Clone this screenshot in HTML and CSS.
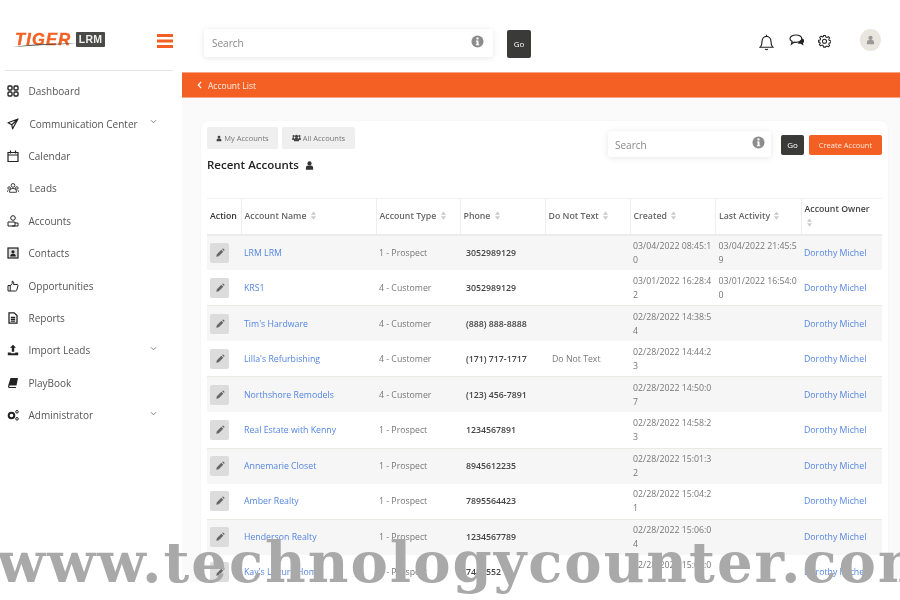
FILE: index.html
```html
<!DOCTYPE html>
<html lang="en">
<head>
<meta charset="utf-8">
<title>Account List</title>
<link rel="stylesheet" href="styles.css">
</head>
<body>
<svg class="defs" width="0" height="0">
  <defs>
    <symbol id="pencil" viewBox="0 0 12 12"><path d="M1.500 10.500l.7-3 5.400-5.400 2.300 2.300-5.400 5.400zM8.500 1.300l.5-.5a.8.8 0 0 1 1.100 0l1.100 1.100a.8.8 0 0 1 0 1.100l-.5.500z" fill="currentColor"/></symbol>
    <symbol id="sort" viewBox="0 0 8 12"><path d="M4 .5L7.500 5H.5zM4 11.500L.5 7h7z" fill="currentColor"/></symbol>
    <symbol id="user" viewBox="0 0 12 12"><circle cx="6" cy="3.200" r="2.800" fill="currentColor"/><path d="M1.200 11.500V9a3 3 0 0 1 3-3h3.600a3 3 0 0 1 3 3v2.500z" fill="currentColor"/></symbol>
    <symbol id="chev" viewBox="0 0 8 6"><path d="M1 1.500l3 3 3-3" fill="none" stroke="currentColor" stroke-width="1.100"/></symbol>
    <symbol id="info" viewBox="0 0 14 14"><circle cx="7" cy="7" r="6.500" fill="currentColor"/><rect x="5.900" y="2.600" width="2.200" height="2.200" fill="#fff"/><path d="M5.200 5.800h2.900v4.100h.8v1.200H5.200V9.900H6V7H5.200z" fill="#fff"/></symbol>
  </defs>
</svg>
<div class="app">
  <aside class="sidebar">
    <div class="brand">
      <div class="logo"><span class="logo-tiger">TIGER</span><span class="logo-lrm">LRM</span>
        <svg class="logo-swoosh" viewBox="0 0 64 6"><path d="M0 6C14 3.500 36 2.500 64 2.500 40 3.500 20 4.500 0 6z" fill="#4a4a48"/></svg>
      </div>
      <svg class="burger" viewBox="0 0 16 14"><path d="M0 0h16v3H0zM0 5.500h16v3H0zM0 11h16v3H0z" fill="#f46023"/></svg>
    </div>
    <nav class="nav">
      <a class="nav-item"><svg class="nav-ico" viewBox="0 0 12 12"><g fill="none" stroke="#222" stroke-width="1.400"><rect x="1" y="1" width="4" height="4" rx="1"/><rect x="7" y="1" width="4" height="4" rx="1"/><rect x="1" y="7" width="4" height="4" rx="1"/><rect x="7" y="7" width="4" height="4" rx="1"/></g></svg><span>Dashboard</span></a>
      <a class="nav-item nudge"><svg class="nav-ico" viewBox="0 0 12 12"><path d="M11 1L1 4.800l3.800 2 .8 4zM11 1L4.800 6.800" fill="none" stroke="#222" stroke-width="1.200" stroke-linejoin="round"/></svg><span>Communication Center</span><svg class="chev"><use href="#chev"/></svg></a>
      <a class="nav-item"><svg class="nav-ico" viewBox="0 0 12 12"><path d="M1 2.500h10v9H1zM1 5h10M3.500 .5v3M8.500 .5v3" fill="none" stroke="#222" stroke-width="1.200"/></svg><span>Calendar</span></a>
      <a class="nav-item nudge"><svg class="nav-ico" viewBox="0 0 14 12"><g fill="none" stroke="#222" stroke-width="1"><circle cx="7" cy="3" r="2.200"/><path d="M3 9.500a4 3 0 0 1 8 0v1.500H3z"/><circle cx="2.500" cy="6" r="1.500"/><circle cx="11.500" cy="6" r="1.500"/><path d="M.5 10.500V9.500l1-1M13.500 10.500V9.500l-1-1"/></g></svg><span>Leads</span></a>
      <a class="nav-item"><svg class="nav-ico" viewBox="0 0 12 12"><g fill="none" stroke="#222" stroke-width="1"><circle cx="6" cy="3" r="2.300"/><path d="M1 7h7v4H1zM8 8h3v3H5"/></g></svg><span>Accounts</span></a>
      <a class="nav-item"><svg class="nav-ico" viewBox="0 0 12 12"><rect x="1" y="1" width="10" height="10" fill="#ddd" stroke="#222" stroke-width="1.200"/><circle cx="6" cy="4.800" r="1.600" fill="#222"/><path d="M3.200 9.500a2.800 2.800 0 0 1 5.600 0z" fill="#222"/></svg><span>Contacts</span></a>
      <a class="nav-item"><svg class="nav-ico" viewBox="0 0 12 12"><path d="M1 5.500h2.200v5.500H1zM3.200 6l2-2.500V1.200c1.500 0 1.800 1.300 1.300 3.300h3.700c.8 0 1 .8.700 1.500l-1.200 4.300c-.2.500-.5.700-1 .7H3.200" fill="none" stroke="#222" stroke-width="1"/></svg><span>Opportunities</span></a>
      <a class="nav-item"><svg class="nav-ico" viewBox="0 0 12 12"><path d="M2 .8h5.200L10 3.600v7.600H2zM3.800 5.500h4.400M3.800 7.300h4.400M3.800 9.100h4.400" fill="none" stroke="#222" stroke-width="1.300"/></svg><span>Reports</span></a>
      <a class="nav-item"><svg class="nav-ico" viewBox="0 0 12 12"><path d="M6 .8l3 3H7.200v4H4.800v-4H3zM.8 8.500h3v.8h4.400v-.8h3v2.700H.8z" fill="#222"/></svg><span>Import Leads</span><svg class="chev"><use href="#chev"/></svg></a>
      <a class="nav-item"><svg class="nav-ico" viewBox="0 0 12 12"><path d="M3.500 1H11L9.500 8.500H2.800c-.8 0-1 1.500 0 1.500H9v1H2.300C.8 11 .8 9 1.500 7.500z" fill="#222"/></svg><span>PlayBook</span></a>
      <a class="nav-item"><svg class="nav-ico" viewBox="0 0 12 12"><circle cx="4.500" cy="6.500" r="2.800" fill="none" stroke="#222" stroke-width="2"/><circle cx="10" cy="2.800" r="1.300" fill="none" stroke="#222" stroke-width="1"/><circle cx="10" cy="9.800" r="1.300" fill="none" stroke="#222" stroke-width="1"/></svg><span>Administrator</span><svg class="chev"><use href="#chev"/></svg></a>
    </nav>
  </aside>
  <main class="main">
    <header class="topbar">
      <div class="search search-top"><span>Search</span><svg class="info"><use href="#info"/></svg></div>
      <button class="btn-go btn-go-top">Go</button>
      <div class="top-icons">
        <svg class="ti ti-bell" viewBox="0 0 14 16"><path d="M1 12.500c1.500-1.500 1.800-3 1.800-5.500 0-2.800 1.800-4.800 4.200-4.800s4.200 2 4.200 4.800c0 2.500.3 4 1.800 5.500zM5.800 14a1.300 1.300 0 0 0 2.400 0M7 .8v1.400" fill="none" stroke="#222" stroke-width="1.100"/></svg>
        <svg class="ti ti-chat" viewBox="0 0 16 13"><path d="M7 1c3.300 0 5.800 1.600 5.800 3.700S10.300 8.400 7 8.400c-.8 0-1.300 0-2-.2L2.500 10l.6-2.600C1.800 6.800 1 5.800 1 4.700 1 2.600 3.700 1 7 1z" fill="none" stroke="#222" stroke-width="1.200"/><path d="M13.500 4.500c1.200.8 1.800 1.700 1.500 3-.2 1-.8 1.500-1 1.700l.6 2.300-3-1.800c-1 .2-2 0-3-.5z" fill="#222"/></svg>
        <svg class="ti ti-gear" viewBox="0 0 14 14"><path d="M6 1h2l.4 1.700 1.200.5 1.500-.9 1.400 1.400-.9 1.500.5 1.200 1.700.4v2l-1.700.4-.5 1.200.9 1.500-1.400 1.400-1.500-.9-1.200.5L8 13.600H6l-.4-1.700-1.200-.5-1.500.9-1.400-1.400.9-1.500-.5-1.200L.6 8.300v-2l1.700-.4.5-1.200-.9-1.500 1.400-1.400 1.500.9 1.200-.5z" fill="none" stroke="#222" stroke-width="1.100" stroke-linejoin="round"/><circle cx="7" cy="7.300" r="2.200" fill="none" stroke="#222" stroke-width="1.100"/></svg>
        <div class="avatar"><svg class="avatar-ico"><use href="#user"/></svg></div>
      </div>
    </header>
    <div class="crumb"><svg class="crumb-ico" viewBox="0 0 6 10"><path d="M5 1L1.500 5 5 9" fill="none" stroke="#fff" stroke-width="1.500"/></svg><span>Account List</span></div>
    <section class="content">
      <div class="card">
        <div class="toolbar">
          <div class="toolbar-left">
            <div class="tabs">
              <button class="tab"><svg class="tab-ico"><use href="#user"/></svg>My Accounts</button>
              <button class="tab"><svg class="tab-ico tab-ico-wide" viewBox="0 0 14 12"><circle cx="7" cy="3.500" r="2.500" fill="currentColor"/><circle cx="2.500" cy="3" r="1.800" fill="currentColor"/><circle cx="11.500" cy="3" r="1.800" fill="currentColor"/><path d="M3 11V8.500a2.500 2.500 0 0 1 2.500-2.500h3A2.500 2.500 0 0 1 11 8.500V11zM.3 9V7a2 2 0 0 1 2-2h.7v4zM13.700 9V7a2 2 0 0 0-2-2H11v4z" fill="currentColor"/></svg>All Accounts</button>
            </div>
            <h1 class="title">Recent Accounts <svg class="title-ico"><use href="#user"/></svg></h1>
          </div>
          <div class="toolbar-right">
            <div class="search search-card"><span>Search</span><svg class="info"><use href="#info"/></svg></div>
            <button class="btn-go">Go</button>
            <button class="btn-create">Create Account</button>
          </div>
        </div>
        <table class="grid">
          <colgroup><col class="c-action"><col class="c-name"><col class="c-type"><col class="c-phone"><col class="c-dnt"><col class="c-date"><col class="c-date"><col class="c-owner"></colgroup>
          <thead>
            <tr>
              <th class="th-action">Action</th>
              <th>Account Name <svg class="sort"><use href="#sort"/></svg></th>
              <th>Account Type <svg class="sort"><use href="#sort"/></svg></th>
              <th>Phone <svg class="sort"><use href="#sort"/></svg></th>
              <th>Do Not Text <svg class="sort"><use href="#sort"/></svg></th>
              <th>Created <svg class="sort"><use href="#sort"/></svg></th>
              <th>Last Activity <svg class="sort"><use href="#sort"/></svg></th>
              <th class="th-owner">Account Owner <svg class="sort"><use href="#sort"/></svg></th>
            </tr>
          </thead>
          <tbody>
            <tr><td class="td-action"><span class="edit"><svg><use href="#pencil"/></svg></span></td><td><a>LRM LRM</a></td><td>1 - Prospect</td><td class="phone">3052989129</td><td class="dnt"></td><td class="date">03/04/2022 08:45:10</td><td class="date">03/04/2022 21:45:59</td><td><a>Dorothy Michel</a></td></tr>
            <tr><td class="td-action"><span class="edit"><svg><use href="#pencil"/></svg></span></td><td><a>KRS1</a></td><td>4 - Customer</td><td class="phone">3052989129</td><td class="dnt"></td><td class="date">03/01/2022 16:28:42</td><td class="date">03/01/2022 16:54:00</td><td><a>Dorothy Michel</a></td></tr>
            <tr><td class="td-action"><span class="edit"><svg><use href="#pencil"/></svg></span></td><td><a>Tim's Hardware</a></td><td>4 - Customer</td><td class="phone">(888) 888-8888</td><td class="dnt"></td><td class="date">02/28/2022 14:38:54</td><td class="date"></td><td><a>Dorothy Michel</a></td></tr>
            <tr><td class="td-action"><span class="edit"><svg><use href="#pencil"/></svg></span></td><td><a>Lilla's Refurbishing</a></td><td>4 - Customer</td><td class="phone">(171) 717-1717</td><td class="dnt">Do Not Text</td><td class="date">02/28/2022 14:44:23</td><td class="date"></td><td><a>Dorothy Michel</a></td></tr>
            <tr><td class="td-action"><span class="edit"><svg><use href="#pencil"/></svg></span></td><td><a>Northshore Remodels</a></td><td>4 - Customer</td><td class="phone">(123) 456-7891</td><td class="dnt"></td><td class="date">02/28/2022 14:50:07</td><td class="date"></td><td><a>Dorothy Michel</a></td></tr>
            <tr><td class="td-action"><span class="edit"><svg><use href="#pencil"/></svg></span></td><td><a>Real Estate with Kenny</a></td><td>1 - Prospect</td><td class="phone">1234567891</td><td class="dnt"></td><td class="date">02/28/2022 14:58:23</td><td class="date"></td><td><a>Dorothy Michel</a></td></tr>
            <tr><td class="td-action"><span class="edit"><svg><use href="#pencil"/></svg></span></td><td><a>Annemarie Closet</a></td><td>1 - Prospect</td><td class="phone">8945612235</td><td class="dnt"></td><td class="date">02/28/2022 15:01:32</td><td class="date"></td><td><a>Dorothy Michel</a></td></tr>
            <tr><td class="td-action"><span class="edit"><svg><use href="#pencil"/></svg></span></td><td><a>Amber Realty</a></td><td>1 - Prospect</td><td class="phone">7895564423</td><td class="dnt"></td><td class="date">02/28/2022 15:04:21</td><td class="date"></td><td><a>Dorothy Michel</a></td></tr>
            <tr><td class="td-action"><span class="edit"><svg><use href="#pencil"/></svg></span></td><td><a>Henderson Realty</a></td><td>1 - Prospect</td><td class="phone">1234567789</td><td class="dnt"></td><td class="date">02/28/2022 15:06:04</td><td class="date"></td><td><a>Dorothy Michel</a></td></tr>
            <tr><td class="td-action"><span class="edit"><svg><use href="#pencil"/></svg></span></td><td><a>Kay's Luxury Home</a></td><td>1 - Prospect</td><td class="phone">7445552</td><td class="dnt"></td><td class="date">02/28/2022 15:09:04</td><td class="date"></td><td><a>Dorothy Michel</a></td></tr>
          </tbody>
        </table>
      </div>
    </section>
  </main>
</div>
<div class="watermark">www.technologycounter.com</div>
</body>
</html>
```
FILE: styles.css
```css
* { box-sizing: border-box; }
html, body { margin: 0; padding: 0; width: 900px; height: 600px; overflow: hidden; background: #fff; }
body { font-family: "Open Sans", "Liberation Sans", sans-serif; color: #444; position: relative; }
.defs { position: absolute; }
.app { display: flex; width: 900px; height: 582px; overflow: hidden; filter: blur(0.4px); }

.sidebar { width: 182px; flex: none; background: #fff; display: flex; flex-direction: column; position: relative; }
.brand { height: 71px; margin: 0 9px 0 5px; padding: 32px 0 0 10px; border-bottom: 1px solid #e4e4e4; display: flex; justify-content: space-between; align-items: flex-start; }
.logo { display: flex; align-items: center; height: 15px; position: relative; }
.logo-tiger { font: italic 700 16.500px/15px "Liberation Sans", sans-serif; color: #f46023; -webkit-text-stroke: .4px #f46023; width: 61px; letter-spacing: 1.200px; }
.logo-lrm { background: #4a4a48; color: #eee; font: 700 10.500px/15px "Liberation Sans", sans-serif; width: 29px; height: 15px; text-align: center; letter-spacing: .3px; border-radius: 1px; }
.logo-swoosh { position: absolute; left: -2px; top: 9px; width: 64px; height: 6px; }
.burger { width: 16px; height: 14px; margin-top: 2px; }
.nav { display: flex; flex-direction: column; padding: 4px 0 0 7px; }
.nav-item { display: flex; align-items: center; height: 32.400px; font-size: 10px; color: #555; }
.nav-ico { width: 12px; height: 12px; margin-right: 9.500px; flex: none; }
.nudge span { margin-left: 1px; }
.chev { width: 7px; height: 5px; color: #777; position: absolute; left: 150px; margin-top: -4px; }

.main { flex: 1; min-width: 0; display: flex; flex-direction: column; background: #fafafa; }
.topbar { height: 72px; flex: none; background: #fff; display: flex; align-items: flex-start; padding: 29px 0 0 22px; }
.search { display: flex; align-items: center; justify-content: space-between; background: #fff; border-radius: 3px; box-shadow: 0 1px 6px rgba(0,0,0,.1); color: #888; font-size: 10px; }
.search-top { width: 289px; height: 28px; padding: 0 9px 0 8px; }
.search-card { width: 163px; height: 26px; padding: 0 6px 0 7px; margin: -4px 10px 0 0; }
.search-card span { margin-top: 2px; }
.info { width: 13px; height: 13px; color: #8c8c8c; margin-top: -3px; }
.btn-go { width: 23px; height: 20px; border: 0; padding: 0 0 2px; background: #3a3a38; color: #fff; border-radius: 2px; font: 8px "Open Sans", sans-serif; }
.btn-go-top { width: 24px; height: 28px; margin: 1px 0 0 14px; }
.top-icons { display: flex; align-items: flex-start; margin-left: 228px; }
.ti { flex: none; }
.ti-bell { width: 15px; height: 17px; margin-top: 5px; }
.ti-chat { width: 16px; height: 13px; margin: 5px 0 0 15px; }
.ti-gear { width: 13px; height: 14px; margin: 5px 0 0 13px; }
.avatar { width: 21px; height: 22px; border-radius: 50%; background: #e9e5df; margin: 0 0 0 29px; display: flex; align-items: center; justify-content: center; }
.avatar-ico { width: 9px; height: 10px; color: #999; }

.crumb { height: 26px; flex: none; background: #f46023; display: flex; align-items: center; padding-left: 15px; color: #fdeee6; font-size: 8.500px; border-top: 1px solid #f8a583; border-bottom: 1px solid #f8a583; }
.crumb-ico { width: 5px; height: 8px; margin-right: 6px; }

.content { flex: 1; padding: 23px 12px 0 19px; min-height: 0; }
.card { background: #fff; border-radius: 8px 8px 0 0; padding: 6px 6px 0; height: 100%; overflow: hidden; box-shadow: 0 0 3px rgba(0,0,0,.04); }
.toolbar { display: flex; justify-content: space-between; height: 71px; }
.tabs { display: flex; gap: 4px; }
.tab { height: 22px; width: 71px; border: 0; background: #efefef; border-radius: 2px; color: #777; font: 7.500px "Open Sans", sans-serif; padding: 0; display: flex; align-items: center; justify-content: center; gap: 2px; }
.tab + .tab { width: 73px; }
.tab-ico { width: 6px; height: 7px; color: #444; }
.tab-ico-wide { width: 9px; height: 8px; }
.title { margin: 7px 0 0; font-size: 11.500px; line-height: 18px; font-weight: 600; color: #222; display: flex; align-items: center; gap: 3px; }
.title-ico { width: 9px; height: 11px; color: #333; margin-left: 3px; }
.toolbar-right { display: flex; align-items: flex-start; padding-top: 8px; }
.toolbar-right .btn-go { margin-right: 5px; }
.btn-create { width: 73px; height: 20px; border: 0; padding: 0 0 1px; background: #f46023; color: #fde6da; border-radius: 2px; font: 7.500px "Open Sans", sans-serif; }

.grid { width: 675px; table-layout: fixed; border-collapse: collapse; font-size: 8.750px; }
.c-action { width: 34px; } .c-name { width: 135px; } .c-type { width: 84px; } .c-phone { width: 85px; } .c-dnt { width: 85px; } .c-date { width: 85.500px; } .c-owner { width: 81px; }
.grid th { height: 36px; padding: 0 3px; text-align: left; font-size: 8.750px; font-weight: 600; color: #666; border-left: 1px solid #eee; border-top: 1px solid #f2f2f2; border-bottom: 2px solid #ececec; line-height: 14px; }
.grid th:first-child { border-left: 0; }
.grid .th-action { color: #333; }
.grid .th-owner { padding-right: 10px; color: #444; }
.sort { width: 7px; height: 9px; color: #ccc; vertical-align: -1px; margin-left: 1px; }
.grid td { height: 35.600px; padding: 0 3px; color: #777; line-height: 14px; border-bottom: 1px solid #ebe9e4; }
.grid tbody tr:nth-child(odd) td { background: #f6f6f6; border-bottom: 0; }
.grid a { color: #5485e0; }
.grid .phone { font-weight: 600; color: #444; padding-left: 6px; }
.grid .dnt { padding-left: 7px; }
.date { word-break: break-all; }
.grid .td-action { padding: 0 0 0 3px; }
.edit { width: 19px; height: 20px; display: flex; align-items: center; justify-content: center; background: #dcdcdc; border-radius: 2px; color: #666; }
.edit svg { width: 10px; height: 10px; }

.watermark { position: absolute; left: -3px; top: 527px; font: 700 56px/70px "DejaVu Serif", serif; color: #a9a9a9; white-space: nowrap; letter-spacing: 2px; }
```
